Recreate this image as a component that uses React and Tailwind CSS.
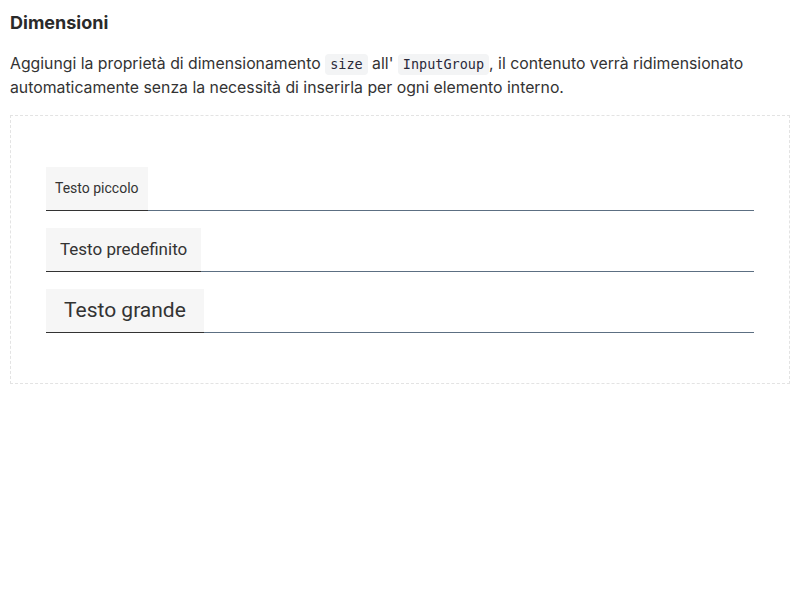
export default function App() {
  const rows = [
    { label: "Testo piccolo", text: "text-[14px]", pad: "px-[9px]" },
    { label: "Testo predefinito", text: "text-[17px]", pad: "px-[14px]" },
    { label: "Testo grande", text: "text-[21px]", pad: "px-[18px]" },
  ];
  const mono = { fontFamily: "'DejaVu Sans Mono', monospace" };
  return (
    <div className="bg-white min-h-[600px] w-[800px] px-[10px] pt-[11px] text-[#333]" style={{ fontFamily: "Inter, 'Liberation Sans', sans-serif" }}>
      <h3 className="text-[18px] font-bold leading-[24px] text-[#2a2a2a]">Dimensioni</h3>
      <p className="mt-[17px] text-[15.8px] leading-[24px] text-[#333]">
        Aggiungi la proprietà di dimensionamento{" "}
        <code className="inline-block bg-[#f3f4f5] rounded-[4px] px-[5px] leading-[21px] text-[13.5px] text-[#2a2a3a]" style={mono}>size</code>{" "}
        all'{" "}
        <code className="inline-block bg-[#f3f4f5] rounded-[4px] px-[5px] leading-[21px] text-[13.5px] text-[#2a2a3a]" style={mono}>InputGroup</code>
        , il contenuto verrà ridimensionato automaticamente senza la necessità di inserirla per ogni elemento interno.
      </p>
      <div className="mt-[15px] border border-dashed border-[#e3e3e3] px-[35px] pt-[51px] pb-[50px] flex flex-col gap-[17px]">
        {rows.map((r) => (
          <div key={r.label} className="flex border-b border-[#5c6f82]">
            <div
              className={`h-[44px] ${r.pad} ${r.text} bg-[#f6f6f6] flex items-center text-[#333] border-b border-[#333] -mb-px`}
              style={{ fontFamily: "Roboto, 'Open Sans', sans-serif" }}
            >
              {r.label}
            </div>
            <div className="flex-1" />
          </div>
        ))}
      </div>
    </div>
  );
}
